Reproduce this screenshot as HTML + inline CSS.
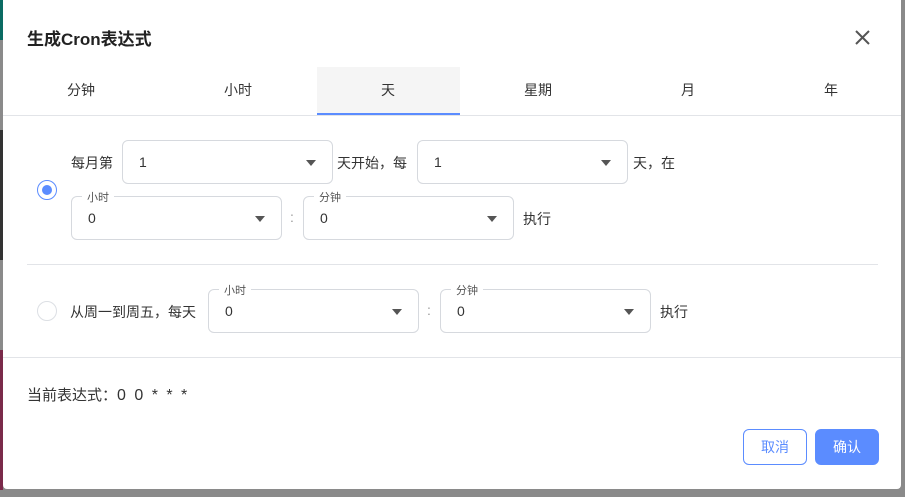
<!DOCTYPE html><html><head><meta charset="utf-8"><style>
*{box-sizing:border-box;margin:0;padding:0}
body{width:905px;height:497px;position:relative;overflow:hidden;background:#8a8a8a;font-family:"Liberation Sans","Noto Sans CJK SC",sans-serif;color:#333;font-size:14px}
.a{position:absolute}
.dlg{left:3px;top:0;width:898px;height:489px;background:#fff;border-radius:0 0 4px 4px}
.sel{position:absolute;border:1px solid #d6d9de;border-radius:6px;height:44px;font-size:14px;color:#333}
.sel .v{position:absolute;left:16px;top:13px}
.sel .ar{position:absolute;right:16px;top:19px;width:0;height:0;border-left:5.5px solid transparent;border-right:5.5px solid transparent;border-top:6px solid #555}
.sel .lb{position:absolute;left:10px;top:-8px;background:#fff;padding:0 5px;font-size:11px;color:#555}
.t{position:absolute;font-size:14px;color:#333}
.tab{position:absolute;top:80px;font-size:14px;color:#333}
.btn{position:absolute;top:429px;width:64px;height:36px;border-radius:6px;font-size:14px;text-align:center;line-height:34px}
</style></head><body>
<div class="a" style="left:0;top:0;width:3px;height:40px;background:#0b6b63"></div>
<div class="a" style="left:0;top:130px;width:3px;height:130px;background:#333"></div>
<div class="a" style="left:0;top:350px;width:3px;height:140px;background:#7a2a4a"></div>
<div class="a dlg"></div>
<div class="t" style="left:27px;top:25px;font-size:17px;font-weight:bold;color:#222">生成Cron表达式</div>
<svg class="a" style="left:854px;top:29px" width="17" height="17" viewBox="0 0 17 17"><path d="M2 2L15 15M15 2L2 15" stroke="#555" stroke-width="2"/></svg>
<div class="a" style="left:317px;top:67px;width:143px;height:48px;background:#f5f5f5;border-bottom:2px solid #5b8cff"></div>
<div class="tab" style="left:67px">分钟</div>
<div class="tab" style="left:224px">小时</div>
<div class="tab" style="left:381px">天</div>
<div class="tab" style="left:524px">星期</div>
<div class="tab" style="left:681px">月</div>
<div class="tab" style="left:824px">年</div>
<div class="a" style="left:3px;top:115px;width:898px;height:1px;background:#e2e4e8"></div>
<div class="a" style="left:37px;top:180px;width:20px;height:20px;border-radius:50%;border:1px solid #5b8cff"></div>
<div class="a" style="left:42px;top:185px;width:10px;height:10px;border-radius:50%;background:#5b8cff"></div>
<div class="t" style="left:71px;top:153px">每月第</div>
<div class="sel" style="left:122px;top:140px;width:211px"><span class="v">1</span><span class="ar"></span></div>
<div class="t" style="left:337px;top:153px">天开始，每</div>
<div class="sel" style="left:417px;top:140px;width:211px"><span class="v">1</span><span class="ar"></span></div>
<div class="t" style="left:633px;top:153px">天，在</div>
<div class="sel" style="left:71px;top:196px;width:211px"><span class="lb">小时</span><span class="v">0</span><span class="ar"></span></div>
<div class="t" style="left:290px;top:209px;color:#999">:</div>
<div class="sel" style="left:303px;top:196px;width:211px"><span class="lb">分钟</span><span class="v">0</span><span class="ar"></span></div>
<div class="t" style="left:523px;top:209px">执行</div>
<div class="a" style="left:27px;top:264px;width:851px;height:1px;background:#e2e4e8"></div>
<div class="a" style="left:37px;top:301px;width:20px;height:20px;border-radius:50%;border:1px solid #dcdfe4"></div>
<div class="t" style="left:70px;top:302px">从周一到周五，每天</div>
<div class="sel" style="left:208px;top:289px;width:211px"><span class="lb">小时</span><span class="v">0</span><span class="ar"></span></div>
<div class="t" style="left:427px;top:302px;color:#999">:</div>
<div class="sel" style="left:440px;top:289px;width:211px"><span class="lb">分钟</span><span class="v">0</span><span class="ar"></span></div>
<div class="t" style="left:660px;top:302px">执行</div>
<div class="a" style="left:3px;top:357px;width:898px;height:1px;background:#e2e4e8"></div>
<div class="t" style="left:27px;top:384px;font-size:15px">当前表达式：<span style="letter-spacing:2px;font-size:16px">0 0 * * *</span></div>
<div class="btn" style="left:743px;border:1px solid #5b8cff;color:#5b8cff;background:#fff">取消</div>
<div class="btn" style="left:815px;background:#5b8cff;color:#fff;border:1px solid #5b8cff">确认</div>
</body></html>
